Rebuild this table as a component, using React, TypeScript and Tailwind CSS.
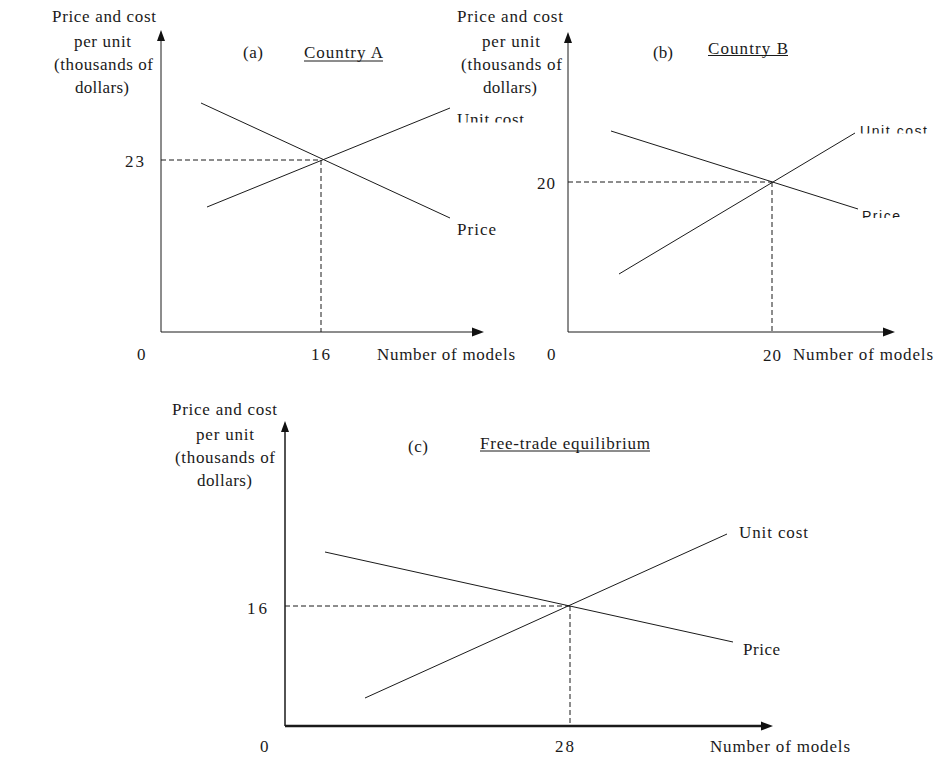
import React from "react";

type TP = { x: number; y: number; len?: number; children: string; sans?: boolean; clip?: string };

function T({ x, y, len, children, sans, clip }: TP) {
  return (
    <text
      x={x}
      y={y}
      textLength={len}
      lengthAdjust={len ? "spacing" : undefined}
      clipPath={clip}
      className={
        sans
          ? "font-['Liberation_Sans',sans-serif] text-[14px] fill-[#1a1a1a]"
          : "font-['Liberation_Serif',serif] text-[17px] fill-[#1a1a1a]"
      }
    >
      {children}
    </text>
  );
}

function L({ x1, y1, x2, y2, dash, w }: { x1: number; y1: number; x2: number; y2: number; dash?: boolean; w?: number }) {
  return (
    <line
      x1={x1}
      y1={y1}
      x2={x2}
      y2={y2}
      stroke="#1a1a1a"
      strokeWidth={w ?? 1}
      strokeDasharray={dash ? "5 3" : undefined}
    />
  );
}

function UpArrow({ x, y }: { x: number; y: number }) {
  return <polygon points={`${x},${y} ${x - 4},${y + 11} ${x + 4},${y + 11}`} fill="#111" />;
}
function RightArrow({ x, y }: { x: number; y: number }) {
  return <polygon points={`${x},${y} ${x - 12},${y - 4.5} ${x - 12},${y + 4.5}`} fill="#111" />;
}

function YLabel({ x, y, lens, xs }: { x: number; y: number; lens: number[]; xs: number[] }) {
  const lines = ["Price and cost", "per unit", "(thousands of", "dollars)"];
  const dy = [0, 25, 48, 71];
  return (
    <>
      {lines.map((s, i) => (
        <T key={i} x={x + xs[i]} y={y + dy[i]} len={lens[i]}>
          {s}
        </T>
      ))}
    </>
  );
}

export default function App() {
  return (
    <div className="w-[935px] h-[758px] bg-white overflow-hidden">
      <svg width="935" height="758" viewBox="0 0 935 758" className="block">
        <defs>
          <clipPath id="cA">
            <rect x="440" y="100" width="100" height="22.5" />
          </clipPath>
          <clipPath id="cBu">
            <rect x="850" y="115" width="85" height="18.5" />
          </clipPath>
          <clipPath id="cBp">
            <rect x="850" y="200" width="85" height="18" />
          </clipPath>
        </defs>

        {/* Panel A */}
        <YLabel x={52} y={22} lens={[104, 57, 99, 54]} xs={[0, 22, 2, 23]} />
        <L x1={161} y1={38} x2={161} y2={332} />
        <UpArrow x={161} y={30} />
        <L x1={161} y1={332} x2={474} y2={332} />
        <RightArrow x={484} y={332} />
        <L x1={201} y1={103} x2={450} y2={218} />
        <L x1={207} y1={207} x2={450} y2={108} />
        <L x1={161} y1={160} x2={321} y2={160} dash />
        <L x1={321} y1={160} x2={321} y2={332} dash />
        <T x={243} y={58} len={20}>(a)</T>
        <T x={304} y={58} len={79}>Country A</T>
        <L x1={304} y1={61} x2={383} y2={61} />
        <T x={125} y={167} len={19}>23</T>
        <T x={137} y={360}>0</T>
        <T x={311} y={360} len={19}>16</T>
        <T x={377} y={360} len={138}>Number of models</T>
        <T x={457} y={125} len={67} clip="url(#cA)">Unit cost</T>
        <T x={457} y={235} len={39}>Price</T>

        {/* Panel B */}
        <YLabel x={457} y={22} lens={[106, 58, 101, 54]} xs={[0, 25, 4, 26]} />
        <L x1={568} y1={40} x2={568} y2={332} />
        <UpArrow x={568} y={32} />
        <L x1={568} y1={332} x2={885} y2={332} />
        <RightArrow x={895} y={332} />
        <L x1={611} y1={131} x2={858} y2={209} />
        <L x1={619} y1={274} x2={855} y2={133} />
        <L x1={568} y1={182} x2={772} y2={182} dash />
        <L x1={772} y1={182} x2={772} y2={332} dash />
        <T x={653} y={58} len={20}>(b)</T>
        <T x={708} y={54} len={80}>Country B</T>
        <L x1={708} y1={55.5} x2={788} y2={55.5} />
        <T x={537} y={189} len={18}>20</T>
        <T x={547} y={360}>0</T>
        <T x={763} y={361} len={18}>20</T>
        <T x={793} y={360} len={140}>Number of models</T>
        <T x={860} y={135.5} len={67} sans clip="url(#cBu)">Unit cost</T>
        <T x={862} y={220.5} len={38} sans clip="url(#cBp)">Price</T>

        {/* Panel C */}
        <YLabel x={172} y={415} lens={[105, 58, 100, 55]} xs={[0, 24, 3, 25]} />
        <L x1={285} y1={430} x2={285} y2={726} w={1.5} />
        <UpArrow x={285} y={421} />
        <L x1={285} y1={726} x2={762} y2={726} w={2.5} />
        <RightArrow x={773} y={726} />
        <L x1={325} y1={552} x2={733} y2={642} />
        <L x1={365} y1={698} x2={727} y2={534} />
        <L x1={285} y1={606} x2={570} y2={606} dash />
        <L x1={570} y1={606} x2={570} y2={725} dash />
        <T x={408} y={452} len={20}>(c)</T>
        <T x={480} y={449} len={170}>Free-trade equilibrium</T>
        <L x1={480} y1={451} x2={650} y2={451} />
        <T x={247} y={614} len={20}>16</T>
        <T x={260} y={752}>0</T>
        <T x={555} y={752} len={19}>28</T>
        <T x={710} y={752} len={140}>Number of models</T>
        <T x={739} y={538} len={69}>Unit cost</T>
        <T x={743} y={655} len={37}>Price</T>
      </svg>
    </div>
  );
}
